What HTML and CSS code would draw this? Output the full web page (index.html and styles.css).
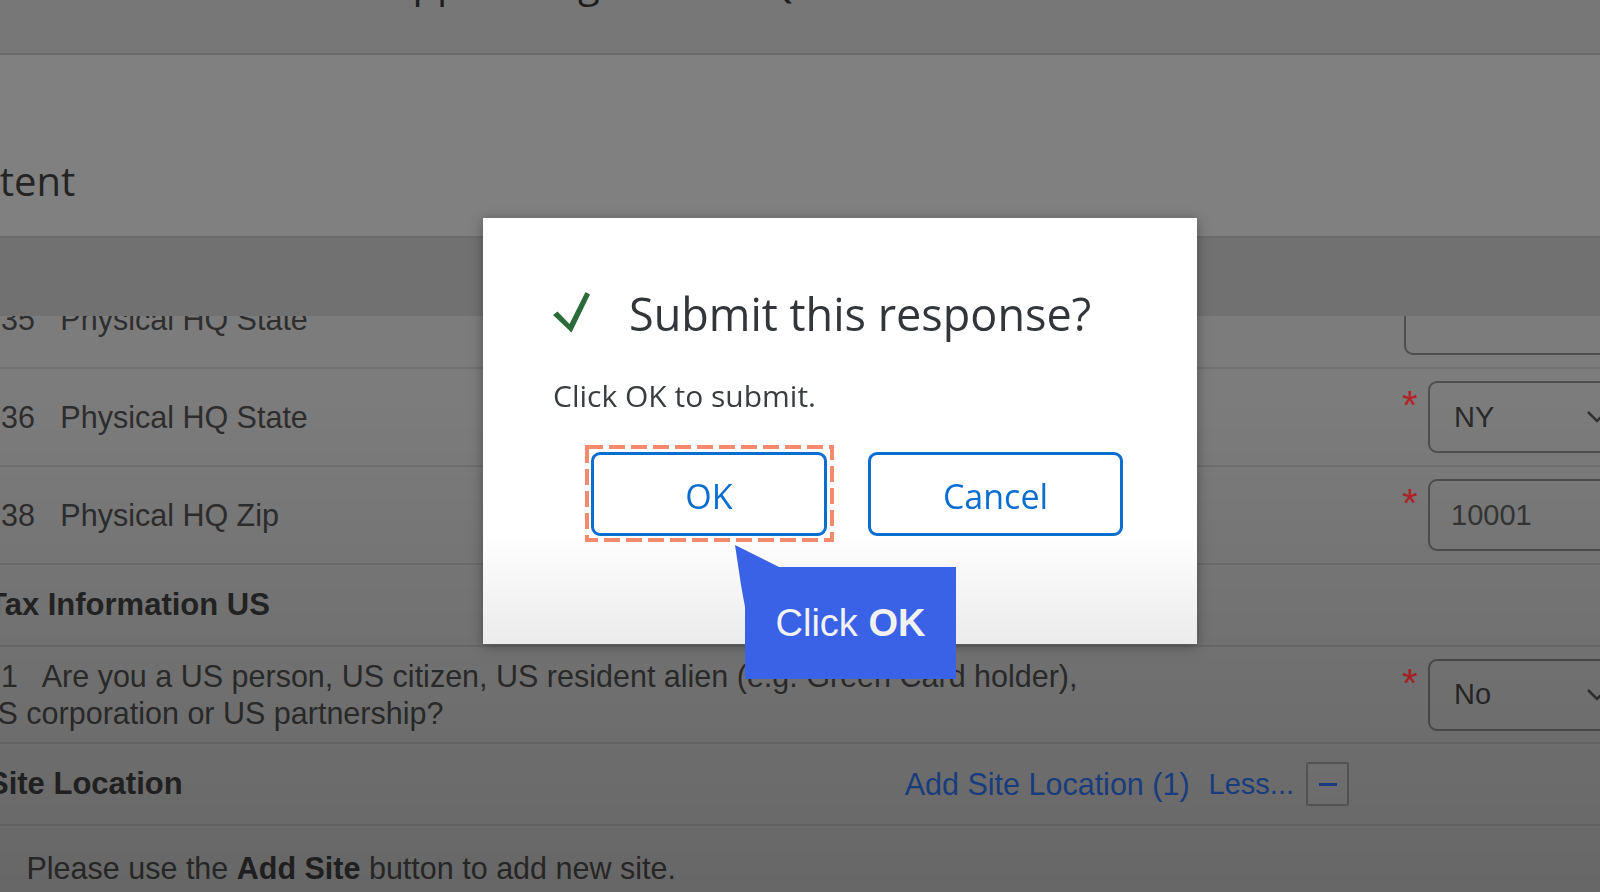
FILE: index.html
```html
<!DOCTYPE html>
<html lang="en">
<head>
  <meta charset="UTF-8">
  <meta name="viewport" content="width=device-width, initial-scale=1.0">
  <title>Supplier Registration Questionnaire</title>
  <link rel="stylesheet" href="styles.css">
</head>
<body>

  <div class="page">
    <div class="topbar">
      <h1 class="doc-title">Doc1850459 - Supplier Registration Questionnaire</h1>
    </div>

    <div class="intro">
      <h2>Content</h2>
    </div>

    <div class="table-head"></div>

    <div class="rows">
      <div class="row">
        <div class="label"><span class="num">1.35</span> Physical HQ State</div>
        <div class="field field-open"></div>
      </div>

      <div class="row">
        <div class="label"><span class="num">1.36</span> Physical HQ State</div>
        <span class="req">*</span>
        <div class="field field-select">
          NY
          <svg class="chevron" width="22" height="14" viewBox="0 0 22 14"><polyline points="2,2 11,11 20,2" fill="none" stroke="#333" stroke-width="2.5"/></svg>
        </div>
      </div>

      <div class="row">
        <div class="label"><span class="num">1.38</span> Physical HQ Zip</div>
        <span class="req">*</span>
        <div class="field field-text">10001</div>
      </div>

      <div class="section">
        <div class="section-title">Tax Information US</div>
      </div>

      <div class="row row-question">
        <div class="label"><span class="num">6.1</span> Are you a US person, US citizen, US resident alien (e.g. Green Card holder), US corporation or US partnership?</div>
        <span class="req">*</span>
        <div class="field field-select">
          No
          <svg class="chevron" width="22" height="14" viewBox="0 0 22 14"><polyline points="2,2 11,11 20,2" fill="none" stroke="#333" stroke-width="2.5"/></svg>
        </div>
      </div>

      <div class="section">
        <div class="section-title">Site Location</div>
        <div class="actions">
          <a class="link" href="#">Add Site Location (1)</a>
          <a class="link" href="#">Less...</a>
          <button class="collapse"><span class="minus"></span></button>
        </div>
      </div>

      <div class="note">Please use the <b>Add Site</b> button to add new site.</div>
    </div>
  </div>

  <div class="backdrop"></div>

  <div class="dialog">
    <div class="dialog-head">
      <svg class="check" width="37" height="41" viewBox="0 0 37 41">
        <path d="M0 23 L4.5 19.5 L16.5 32 L32.5 0 L37 2.5 L18.5 40.5 Z" fill="#2b6b3a"/>
      </svg>
      <h3 class="dialog-title">Submit this response?</h3>
    </div>
    <p class="dialog-text">Click OK to submit.</p>
    <div class="dialog-actions">
      <div class="focus-ring">
        <svg class="ring" width="249" height="97" viewBox="0 0 249 97">
          <rect x="2" y="2" width="245" height="93" fill="none" stroke="#f3896d" stroke-width="4" stroke-dasharray="16 6"/>
        </svg>
        <button class="btn">OK</button>
      </div>
      <button class="btn btn-cancel">Cancel</button>
    </div>
  </div>

  <div class="callout">Click&nbsp;<b>OK</b></div>

</body>
</html>
```

FILE: styles.css
```css
body {
  margin: 0;
  height: 892px;
  overflow: hidden;
  background: #7c7c7c;
  font-family: "Liberation Sans", Arial, sans-serif;
}

.page {
  width: 1900px;
  margin-left: -74px;
  min-height: 892px;
  background: #7c7c7c;
}

/* page header, scrolled mostly out of view */
.topbar {
  height: 53px;
  overflow: hidden;
  background: #777;
  border-bottom: 2px solid #6b6b6b;
}

.doc-title {
  margin: -42px 0 0;
  padding-left: 174px;
  font: 400 40px/48px "Open Sans", sans-serif;
  color: #1e1e1e;
  white-space: nowrap;
}

.intro {
  height: 183px;
  box-sizing: border-box;
  padding-top: 102px;
  background: #808080;
  border-bottom: 2px solid #6c6c6c;
}

.intro h2 {
  margin: 0;
  font: 400 40px/48px "Open Sans", sans-serif;
  color: #242424;
}

.table-head {
  position: relative;
  z-index: 1;
  height: 78px;
  background: #717171;
}

.rows {
  margin-top: -45px;
}

.row {
  display: grid;
  grid-template-columns: 1474px 28px 1fr;
  align-items: center;
  height: 98px;
  box-sizing: border-box;
  border-bottom: 2px solid #717171;
}

.row-question {
  height: 97px;
}

.label {
  padding: 0 300px 0 49.5px;
  font-size: 30.5px;
  line-height: 37px;
  color: #2e2e2e;
}

.num {
  display: inline-block;
  margin-right: 17px;
}

.req {
  align-self: start;
  padding: 16px 0 0 2px;
  font-size: 40px;
  line-height: 1;
  color: #b3242a;
}

.field {
  display: flex;
  align-items: center;
  height: 72px;
  box-sizing: border-box;
  border: 2px solid #4f4f4f;
  border-radius: 9px;
  padding-left: 24px;
  font-size: 29px;
  color: #2a2a2a;
}

.field-open {
  grid-column: 2 / 4;
  margin-left: 4px;
}

.field-select {
  width: 200px;
}

.field-text {
  padding-left: 21px;
  color: #363636;
}

.chevron {
  margin-left: auto;
  margin-right: 18px;
}

.section {
  display: flex;
  align-items: center;
  height: 82px;
  box-sizing: border-box;
  padding-left: 62px;
  border-bottom: 2px solid #717171;
}

.section-title {
  font-size: 31px;
  font-weight: bold;
  color: #252525;
}

.actions {
  display: flex;
  align-items: center;
  margin-left: auto;
  margin-right: 477px;
}

.link {
  font-size: 30.5px;
  color: #1d4690;
  text-decoration: none;
  margin-right: 19px;
}

.link + .link {
  font-size: 29px;
  margin-right: 12px;
}

.collapse {
  width: 43px;
  height: 44px;
  padding: 0;
  display: flex;
  align-items: center;
  justify-content: center;
  background: #7e7e7e;
  border: 2px solid #5f5f5f;
  border-radius: 2px;
}

.minus {
  width: 18px;
  height: 3px;
  background: #1d4690;
}

.note {
  padding: 24px 0 0 100.5px;
  font-size: 30.5px;
  line-height: 37px;
  color: #2e2e2e;
}

.note b {
  color: #252525;
}

/* modal backdrop: darkens the lower part of the page */
.backdrop {
  position: fixed;
  inset: 0;
  z-index: 2;
  background: linear-gradient(180deg, rgba(0,0,0,0) 45%, rgba(0,0,0,0.17) 100%);
  pointer-events: none;
}

.dialog {
  position: absolute;
  z-index: 3;
  left: 483px;
  top: 218px;
  width: 714px;
  height: 426px;
  box-sizing: border-box;
  padding: 70px 0 0 70px;
  background: linear-gradient(180deg, #fff 74%, #ebebeb 100%);
  box-shadow: 0 2px 12px rgba(0,0,0,0.35);
  font-family: "Open Sans", sans-serif;
}

.dialog-head {
  display: flex;
  align-items: center;
  gap: 39px;
}

.check {
  margin-top: -4px;
}

.dialog-title {
  margin: 0;
  font-size: 45px;
  font-weight: 400;
  line-height: 52px;
  color: #32363a;
}

.dialog-text {
  margin: 36px 0 0;
  font-size: 30px;
  line-height: 40px;
  color: #3a3d40;
}

.dialog-actions {
  display: flex;
  align-items: center;
  gap: 34px;
  margin-top: 29px;
  padding-left: 32px;
}

.focus-ring {
  position: relative;
  padding: 7px 7px 6px 6px;
}

.ring {
  position: absolute;
  left: 0;
  top: 0;
}

.btn {
  display: block;
  width: 236px;
  height: 84px;
  padding: 4px 0 0;
  border: 3px solid #0a6ed1;
  border-radius: 9px;
  background: #fff;
  color: #0a6ed1;
  font: 400 34px "Open Sans", sans-serif;
}

.btn-cancel {
  width: 255px;
}

/* walkthrough tip */
.callout {
  position: absolute;
  z-index: 4;
  left: 745px;
  top: 567px;
  width: 211px;
  height: 112px;
  display: flex;
  align-items: center;
  justify-content: center;
  background: #3a62e6;
  color: #f2f2f2;
  font-size: 38px;
}

.callout::before {
  content: "";
  position: absolute;
  left: -10px;
  top: -22px;
  width: 44px;
  height: 62px;
  background: #3a62e6;
  clip-path: polygon(0 0, 44px 22px, 10px 22px, 10px 62px, 6px 40px);
}
```
